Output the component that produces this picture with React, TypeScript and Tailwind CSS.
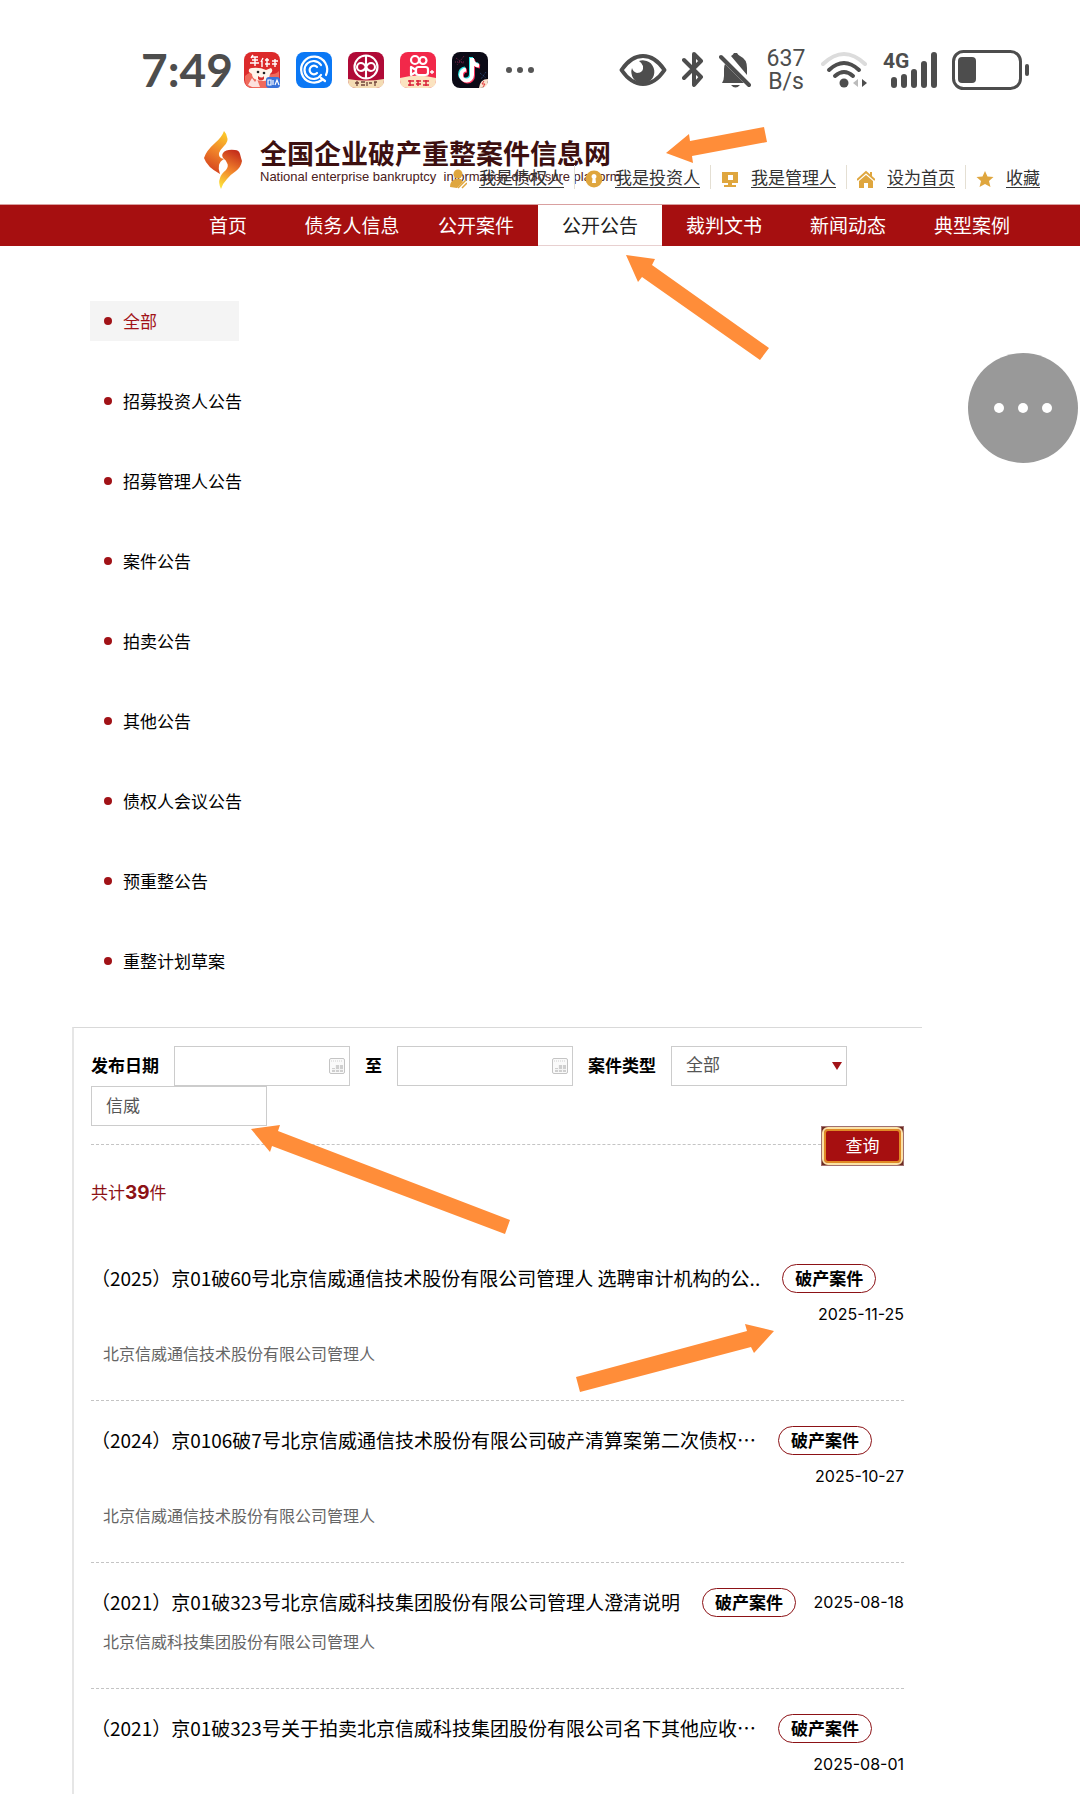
import { useState } from 'react'

const NAV = ['首页', '债务人信息', '公开案件', '公开公告', '裁判文书', '新闻动态', '典型案例']

const CATEGORIES = [
  '全部',
  '招募投资人公告',
  '招募管理人公告',
  '案件公告',
  '拍卖公告',
  '其他公告',
  '债权人会议公告',
  '预重整公告',
  '重整计划草案',
]

const NOTICES = [
  {
    title: '（2025）京01破60号北京信威通信技术股份有限公司管理人 选聘审计机构的公..',
    date: '2025-11-25',
    org: '北京信威通信技术股份有限公司管理人',
  },
  {
    title: '（2024）京0106破7号北京信威通信技术股份有限公司破产清算案第二次债权…',
    date: '2025-10-27',
    org: '北京信威通信技术股份有限公司管理人',
  },
  {
    title: '（2021）京01破323号北京信威科技集团股份有限公司管理人澄清说明',
    date: '2025-08-18',
    org: '北京信威科技集团股份有限公司管理人',
  },
  {
    title: '（2021）京01破323号关于拍卖北京信威科技集团股份有限公司名下其他应收…',
    date: '2025-08-01',
    org: '',
  },
]

function AppIcons() {
  return (
    <div className="flex gap-4">
      <svg viewBox="0 0 36 36" className="size-9">
        <rect width="36" height="36" rx="8" fill="#dc2a2b" />
        <path d="M1 24q6-5 12-4t12 2 10-3v9q0 8-8 8H9q-8 0-8-8z" fill="#ef6a5c" />
        <g stroke="#fff" strokeWidth="1.4" fill="none">
          <path d="M9 3l-2 3M7 5h7M8 8h6M6 11h9M11 5v9" />
          <path d="M19 6l-2 4M18 9v6M21 8h4M23 6v5M21 12h5M23 11v4" />
          <path d="M28 9h6M31 7v4M28 12h5M31 11v4" />
        </g>
        <path d="M5 20q-1-4 3-4 8-1 14 2l5-2q3 3-1 6-1 8-9 7-9-1-9-7z" fill="#fff4ea" />
        <circle cx="14" cy="20" r="1.3" fill="#222" />
        <circle cx="20" cy="21" r="1.3" fill="#222" />
        <path d="M14 24q4 3 6 0v3q-3 3-6 0z" fill="#d7312f" />
        <path d="M4 33l4-7 3 4 2-3 3 8H8z" fill="#fff" opacity=".8" />
        <rect x="22" y="25" width="14" height="11" rx="3" fill="#3a73d9" />
        <path d="M24 28h3v5h-3zM29 28v5M31 33l2-5 2 5" stroke="#fff" strokeWidth="1.2" fill="none" />
      </svg>
      <svg viewBox="0 0 36 36" className="size-9">
        <rect width="36" height="36" rx="8" fill="#0b78f5" />
        <g stroke="#fff" strokeWidth="2.2" fill="none" strokeLinecap="round">
          <path d="M26 28a13 13 0 1 1 4-5" />
          <path d="M25 13a9 9 0 1 0 0 10" />
          <path d="M21 15a4.300 4.300 0 1 0 0 6" />
          <path d="M25 26l4 3" />
        </g>
      </svg>
      <svg viewBox="0 0 36 36" className="size-9">
        <rect width="36" height="36" rx="8" fill="#b00a37" />
        <path d="M0 27q18 3 36 0v1q0 8-8 8H8q-8 0-8-8z" fill="#f4dcb4" />
        <g stroke="#fff" strokeWidth="2.100" fill="none">
          <circle cx="18" cy="15" r="11.500" />
          <path d="M18 4v7M18 19v8M18 15q-2 4-5 4a4 4 0 0 1 0-8q3 0 5 4t5 4a4 4 0 0 0 0-8q-3 0-5 4zM18 9v12" />
        </g>
        <path d="M7 31h4M9 29v5M13 30h4M13 33h4M19 30v4M21 31h3M26 30h3M27 30v4" stroke="#70433a" strokeWidth="1.300" />
      </svg>
      <svg viewBox="0 0 36 36" className="size-9">
        <rect width="36" height="36" rx="8" fill="#f2284a" />
        <path d="M0 26q18-5 36 0v2q0 8-8 8H8q-8 0-8-8z" fill="#fbe3c0" />
        <g stroke="#fff" strokeWidth="2.200" fill="none" strokeLinejoin="round">
          <circle cx="15" cy="8" r="4" />
          <circle cx="23" cy="8.500" r="3.500" />
          <rect x="16" y="15" width="12" height="8" rx="2.500" />
          <path d="M16 18l-5-3v8l5-3" />
          <path d="M32 18v4M30 20h4" strokeWidth="1.300" />
        </g>
        <path d="M8 29h6M10 28v6M8 33h6M16 29h5M18 28v6M16 32h5M23 29h6M26 28v6M23 33h6" stroke="#d92339" strokeWidth="1.500" />
      </svg>
      <svg viewBox="0 0 36 36" className="size-9">
        <rect width="36" height="36" rx="8" fill="#0b0a16" />
        <g stroke="#7a2146" strokeWidth="1" strokeDasharray="1 1">
          <path d="M4 6l8 6M12 4L5 13M3 10h10" />
        </g>
        <path d="M28 21l6 5M34 20l-5 7" stroke="#2b4a7d" strokeDasharray="1 1" />
        <g fill="none" strokeWidth="4">
          <path d="M19 5v17a5.500 5.500 0 1 1-6-5.500M19 6q1 6 7 6.500" stroke="#2be8e4" />
          <path d="M21 7v17a5.500 5.500 0 1 1-6-5.500M21 8q1 6 7 6.500" stroke="#fb3059" />
          <path d="M20 6v17a5.500 5.500 0 1 1-6-5.500M20 7q1 6 7 6.500" stroke="#fff" />
        </g>
        <path d="M27 36q1-9 9-9v1q0 8-8 8z" fill="#fbe3cf" />
        <path d="M32 29l-2 3h3l-2 3" stroke="#e0393c" fill="none" />
      </svg>
    </div>
  )
}

function StatusIcons() {
  return (
    <div className="ml-auto flex items-center gap-[15px] text-[#4d4d4d]">
      <svg viewBox="0 0 48 34" className="h-[34px] w-12">
        <path d="M2.500 17Q12 3 24 3t21.500 14Q36 31 24 31T2.500 17z" fill="none" stroke="currentColor" strokeWidth="4" strokeLinejoin="round" />
        <path d="M20 8a11.500 11.500 0 1 1-7 7q1 4 5 5 7 0 6-7-1-3-4-5z" fill="currentColor" />
      </svg>
      <svg viewBox="0 0 22 36" className="h-9 w-[22px]">
        <path d="M2 8l17 17-7 8V2l7 7L2 26" fill="none" stroke="currentColor" strokeWidth="4" strokeLinecap="round" strokeLinejoin="round" />
      </svg>
      <svg viewBox="0 0 32 36" className="h-9 w-8">
        <path d="M3 31q2-3 2-7v-7q0-3 1-5l19 19zM12 4q2-1 3-3h3q1 2 3 3 7 3 7 12v7z" fill="currentColor" />
        <path d="M12 33h9q-4.500 5-9 0z" fill="currentColor" />
        <path d="M2 5l28 28" stroke="currentColor" strokeWidth="4" strokeLinecap="round" />
      </svg>
      <div className="w-10 text-center font-[Roboto] text-[23px] leading-[23px]">
        637
        <br />
        B/s
      </div>
      <svg viewBox="0 0 47 38" className="h-[38px] w-[47px]" fill="none" strokeWidth="4" strokeLinecap="round">
        <path d="M2 13q21-20 42 0" stroke="#dcdcdc" />
        <path d="M8 19q15-14 30 0" stroke="currentColor" />
        <path d="M14 25q9-8 18 0" stroke="currentColor" />
        <circle cx="23" cy="32" r="4.500" fill="currentColor" />
        <path d="M37 28v8l-5-4z" fill="#bbb" />
        <path d="M41 28v8l5-4z" fill="currentColor" />
      </svg>
      <div className="grid w-[54px]">
        <span className="col-start-1 row-start-1 self-start font-[Roboto] text-[21px] leading-5 font-bold">4G</span>
        <svg viewBox="0 0 54 38" className="col-start-1 row-start-1 h-[38px] w-[54px]" stroke="currentColor" strokeWidth="6" strokeLinecap="round">
          <path d="M11 29v5M21 26v8M31 21v13M41 13v21M51 4v30" />
        </svg>
      </div>
      <svg viewBox="0 0 78 40" className="h-10 w-[78px]">
        <rect x="1.500" y="1.500" width="67" height="37" rx="10" fill="none" stroke="currentColor" strokeWidth="3" />
        <rect x="6" y="7" width="18" height="26" rx="4" fill="currentColor" />
        <rect x="73" y="14" width="4" height="12" rx="2" fill="currentColor" />
      </svg>
    </div>
  )
}

function StatusBar() {
  return (
    <div className="flex h-[120px] items-center pt-5 pr-[50px] pl-[141px]">
      <span className="mr-[11px] font-[Lato] text-[46px] leading-none font-bold text-[#4d4d4d]">7:49</span>
      <AppIcons />
      <svg viewBox="0 0 28 6" className="ml-[18px] h-1.5 w-7" fill="#555">
        <circle cx="3" cy="3" r="3" />
        <circle cx="14" cy="3" r="3" />
        <circle cx="25" cy="3" r="3" />
      </svg>
      <StatusIcons />
    </div>
  )
}

function Flame() {
  return (
    <svg viewBox="0 0 38 58" className="h-[58px] w-[38px]">
      <defs>
        <linearGradient id="flameLeft" x1="0.600" y1="0" x2="0.300" y2="1">
          <stop offset="0" stopColor="#fbc52a" />
          <stop offset=".45" stopColor="#f0842a" />
          <stop offset="1" stopColor="#d23a1c" />
        </linearGradient>
        <linearGradient id="flameRight" x1="0.600" y1="0" x2="0.300" y2="1">
          <stop offset="0" stopColor="#c52f1a" />
          <stop offset=".5" stopColor="#f0802b" />
          <stop offset="1" stopColor="#fde03a" />
        </linearGradient>
      </defs>
      <path d="M20 0q-2 6-9 12Q2 20 0 27q3 9 16 16-2-5-1-9 1-4 5-6-6-1-5-6 1-3 5-7 5-5 3-9-1-4-3-6z" fill="url(#flameLeft)" />
      <path d="M20 28q-3-3-1-6 3-4 12-3 4 0 5 4 1 4 2 7-1 6-6 10-6 4-9 8-4 4-6 10-3-6-1-11 1-4 6-8 3-4 1-7-1-3-3-4z" fill="url(#flameRight)" />
    </svg>
  )
}

const GOLD = '#dfa63e'

const TOP_LINKS = [
  {
    label: '我是债权人',
    icon: (
      <g fill={GOLD}>
        <circle cx="9" cy="5" r="4.500" />
        <path d="M1 18q0-7 6-8l5 0 2 3-6 6z" />
        <path d="M9 19l8-8M13 19l5-5" stroke={GOLD} strokeWidth="1.500" />
      </g>
    ),
  },
  {
    label: '我是投资人',
    icon: (
      <g>
        <circle cx="9" cy="10" r="8.500" fill={GOLD} />
        <path d="M9 5a2.500 2.500 0 0 1 1.500 4.500L11 14H7l.5-4.500A2.500 2.500 0 0 1 9 5z" fill="#fff" />
      </g>
    ),
  },
  {
    label: '我是管理人',
    icon: (
      <g fill={GOLD}>
        <path fillRule="evenodd" d="M1 3h16v11H1zM7 6v5h5V6z" />
        <path d="M7 14h4v2h4v2H3v-2h4z" />
      </g>
    ),
  },
  {
    label: '设为首页',
    icon: (
      <g fill={GOLD}>
        <path d="M9 6l7 6v7h-5v-5H7v5H2v-7z" />
        <path d="M0 11l9-8 9 8M14 3v4" fill="none" stroke={GOLD} strokeWidth="2" />
      </g>
    ),
  },
  {
    label: '收藏',
    icon: <path d="M9 2l2.500 5.500 6 .5-4.500 4 1.500 6L9 15l-5.500 3L5 12 .5 8l6-.5z" fill={GOLD} />,
  },
]

function Header() {
  return (
    <header className="grid h-[84px]">
      <div className="col-start-1 row-start-1 flex items-start gap-[18px] pt-[11px] pl-[204px]">
        <Flame />
        <div className="pt-1 whitespace-nowrap">
          <h1 className="text-[27px] leading-9 font-bold text-[#3d1010]">全国企业破产重整案件信息网</h1>
          <p className="font-['Liberation_Sans'] text-[13px] leading-3 whitespace-pre text-[#4a2020]">
            National enterprise bankruptcy  information disclosure platform
          </p>
        </div>
      </div>
      <nav className="col-start-1 row-start-1 flex items-start justify-end pt-[45px] pr-[30px]">
        {TOP_LINKS.map((link) => (
          <div
            key={link.label}
            className="flex h-6 items-center gap-3 border-r border-[#e4dfd3] px-[10px] last:border-r-0"
          >
            <svg viewBox="0 0 18 20" className="mt-1 h-5 w-[18px]">
              {link.icon}
            </svg>
            <a href="#" className="text-[17px] leading-6 text-[#333] underline underline-offset-3">
              {link.label}
            </a>
          </div>
        ))}
      </nav>
    </header>
  )
}

function CalendarIcon() {
  return (
    <svg viewBox="0 0 16 16" className="pointer-events-none absolute top-3 right-[5px] size-4">
      <rect x=".5" y=".5" width="15" height="15" rx="1.500" fill="#fafafa" stroke="#c4c4c4" />
      <path d="M2 3h12" stroke="#d0d0d0" strokeDasharray="1 1" />
      <path d="M6 7h8v7H3v-4h3z" fill="#cfcfcf" />
      <path d="M3 11.500h11M6.500 7v7M10.500 7v7" stroke="#f4f4f4" />
    </svg>
  )
}

const FIELD = 'h-10 w-44 border border-[#ccc] bg-white pb-1 text-[17px] text-[#555] outline-none'

function DateField({ id, label }: { id: string; label: string }) {
  return (
    <>
      <label htmlFor={id} className="pb-0.5 font-bold">
        {label}
      </label>
      <div className="relative">
        <input id={id} type="text" className={`${FIELD} pr-7 pl-3.5`} />
        <CalendarIcon />
      </div>
    </>
  )
}

function SearchForm() {
  const [keyword, setKeyword] = useState('信威')

  return (
    <form onSubmit={(e) => e.preventDefault()}>
      <div className="flex flex-wrap items-center gap-x-[15px] text-[17px]">
        <DateField id="from" label="发布日期" />
        <DateField id="to" label="至" />
        <label htmlFor="type" className="pb-0.5 font-bold">
          案件类型
        </label>
        <div className="relative">
          <select id="type" className={`${FIELD} appearance-none pl-3.5`}>
            <option>全部</option>
          </select>
          <svg viewBox="0 0 10 8" className="pointer-events-none absolute top-4 right-[5px] h-2 w-2.5">
            <path d="M0 0h10L5 8z" fill="#a11217" />
          </svg>
        </div>
        <input
          type="text"
          aria-label="关键字"
          value={keyword}
          onChange={(e) => setKeyword(e.target.value)}
          className={`${FIELD} px-3.5`}
        />
      </div>
      <div className="flex items-center">
        <span className="mb-1 flex-1 border-t border-dashed border-[#c4c4c4]" />
        <div className="border border-[#a07070] bg-[#6b2a22]">
          <button
            type="submit"
            className="block h-[38px] w-[81px] rounded-md border-2 border-[#fbe3a8] bg-[#a60f10] pb-0.5 text-[17px] text-white ring-2 ring-[#e08a26] ring-inset"
          >
            查询
          </button>
        </div>
      </div>
    </form>
  )
}

function Arrows() {
  return (
    <svg className="pointer-events-none absolute inset-0 h-full w-full" fill="#ff8d39">
      <path d="M666 153L689 134L690 141L764 127L767 142L692 156L693 163Z" />
      <path d="M626 255L655 259L652 265L769 348L760 360L642 277L638 282Z" />
      <path d="M251 1129L280 1125L278 1131L510 1220L505 1234L272 1146L270 1152Z" />
      <path d="M774 1331L745 1324L747 1331L576 1377L580 1392L751 1347L754 1353Z" />
    </svg>
  )
}

export default function App() {
  return (
    <div
      lang="zh-CN"
      className="relative flex min-h-screen flex-col overflow-hidden bg-white font-['Noto_Sans_CJK_SC',sans-serif] text-black"
    >
      <StatusBar />
      <Header />

      <nav className="flex h-[42px] border-t border-[#d9a0a0] bg-[#a60f10] pl-[166px]">
        {NAV.map((item) => (
          <a
            key={item}
            href="#"
            className={
              item === '公开公告'
                ? 'w-31 border-b border-[#e8d0d0] bg-white text-center text-[19px] leading-[39px] text-[#222]'
                : 'w-31 text-center text-[19px] leading-[39px] text-white'
            }
          >
            {item}
          </a>
        ))}
      </nav>

      <ul className="mt-[55px] ml-[90px] flex flex-col items-start gap-10">
        {CATEGORIES.map((name, i) => (
          <li key={name}>
            <a
              href="#"
              className={`flex h-10 w-[149px] items-center gap-[11px] pl-3.5 text-[17px] whitespace-nowrap ${
                i === 0 ? 'bg-[#f4f4f4] text-[#a11217]' : ''
              }`}
            >
              <span className="size-2 shrink-0 rounded-full bg-[#a11217]" />
              {name}
            </a>
          </li>
        ))}
      </ul>

      <main className="mt-[46px] mr-[158px] ml-[72px] flex-1 border-t border-l-2 border-t-[#d9d9d9] border-l-[#e6e6e6] pt-[18px] pr-[18px] pl-[17px]">
        <SearchForm />
        <p className="mt-3 text-[17px] leading-7 text-[#8c1216]">
          共计<strong className="font-[Inter] text-[19px]">39</strong>件
        </p>
        <ul className="mt-8">
          {NOTICES.map((n) => (
            <li
              key={n.title}
              className="border-b border-dashed border-[#c4c4c4] pt-[21px] pb-[26px] last:border-b-0 last:pb-0"
            >
              <div className="flex flex-wrap items-center">
                <a href="#" className="mr-[22px] text-[19px] leading-9 whitespace-nowrap">
                  {n.title}
                </a>
                <span className="mr-4 h-[29px] rounded-full border border-[#8c1216] px-3 text-[17px] leading-[26px] font-bold">
                  破产案件
                </span>
                <time className="ml-auto font-[Inter] text-[16px] leading-9">{n.date}</time>
              </div>
              {n.org && <p className="pl-3 text-[16px] leading-[42px] text-[#666]">{n.org}</p>}
            </li>
          ))}
        </ul>
      </main>

      <button
        type="button"
        aria-label="更多"
        className="absolute top-[353px] right-[2px] flex size-[110px] items-center justify-center gap-[14px] rounded-full bg-[#999]"
      >
        <span className="size-2.5 rounded-full bg-white" />
        <span className="size-2.5 rounded-full bg-white" />
        <span className="size-2.5 rounded-full bg-white" />
      </button>

      <Arrows />
    </div>
  )
}
